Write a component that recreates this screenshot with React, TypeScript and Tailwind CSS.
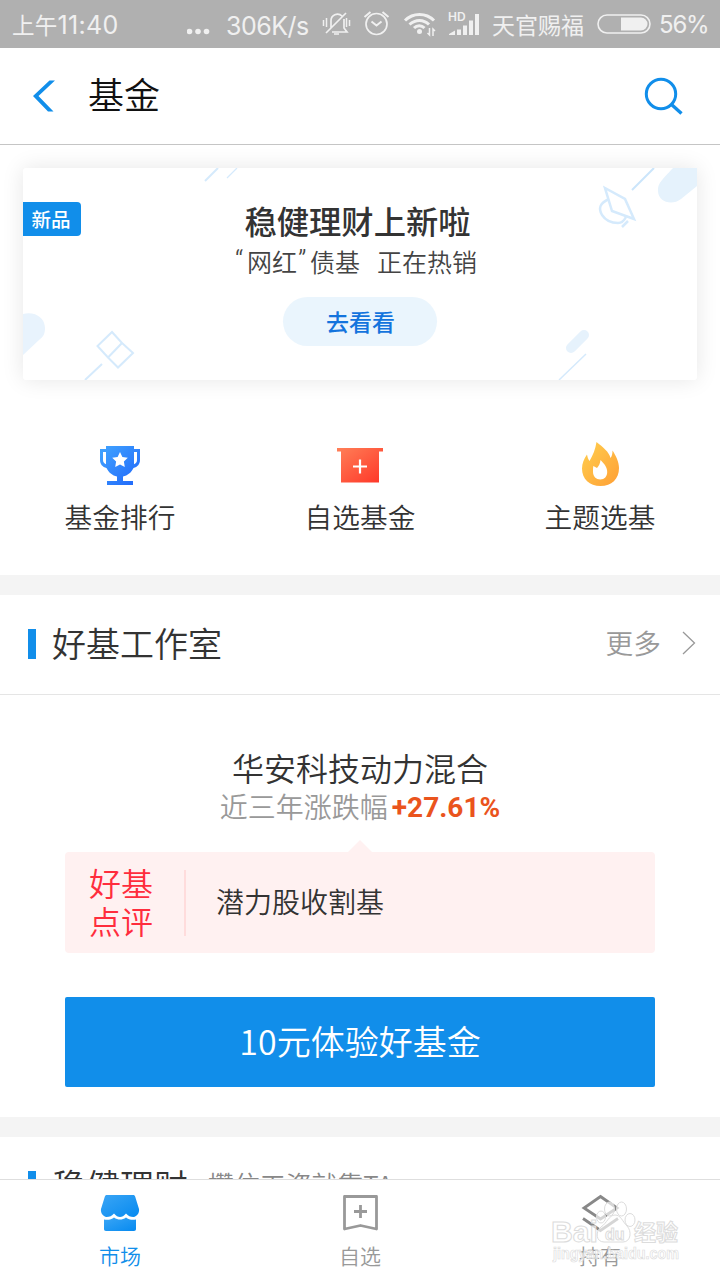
import type { ReactNode } from 'react';

const CJK = "font-['Noto_Sans_CJK_SC',sans-serif]";

function StatusBar() {
  return (
    <div className="flex h-12 shrink-0 items-center bg-[#b0b0b0] pl-[12px] text-[23px] leading-[30px] text-[#f0f0f0]">
      <span className="mt-[3px] w-[175px] whitespace-nowrap font-['Inter','Noto_Sans_CJK_SC',sans-serif] text-[25px] tracking-[0.3px]">
        <span className="text-[22.500px]">上午</span>11:40
      </span>
      <svg className="w-[24px]" height="48" viewBox="0 0 24 48" fill="currentColor">
        <circle cx="2.5" cy="31.5" r="2.8" />
        <circle cx="11" cy="31.5" r="2.8" />
        <circle cx="19.500" cy="31.5" r="2.8" />
      </svg>
      <span className="ml-[15px] mt-[3px] w-[95px] whitespace-nowrap font-['Inter',sans-serif] text-[25px] tracking-[-0.5px]">
        306K/s
      </span>
      <StatusIcons />
      <span className="ml-[11px] w-[105px] whitespace-nowrap text-[23px]">天官赐福</span>
      <svg width="55" height="48" viewBox="0 0 55 48" fill="none">
        <rect x="1" y="15" width="52" height="18" rx="9" stroke="#f0f0f0" strokeWidth="1.6" />
        <path d="M24 17.500h20a6.500 6.500 0 0 1 0 13H24z" fill="#f0f0f0" />
      </svg>
      <span className="ml-[7px] mt-[2px] whitespace-nowrap font-['Inter',sans-serif] text-[24px] tracking-[-1.2px]">56%</span>
    </div>
  );
}

function StatusIcons() {
  return (
    <svg width="160" height="48" viewBox="321 0 160 48" fill="none" stroke="#f0f0f0" strokeWidth="1.700">
      {/* muted bell */}
      <path d="M328 31l3-3v-7a6.500 6.500 0 0 1 11-5M344 19v9l3 4h-15M334 34h5M326 33l20-20" />
      <path d="M323.500 20v6M326.500 18v9M346.500 18v9M349.500 20v6" strokeWidth="1.500" />
      {/* alarm clock */}
      <circle cx="376.500" cy="24" r="10.500" />
      <path d="M371.500 21.500l5 4 5-4M364.500 17l6-5M388.500 17l-6-5" strokeWidth="2" />
      {/* wifi */}
      <path d="M405 20.500c8-8 21-8 29 0M409.500 24.500c6-5.500 14-5.500 19.500 0M414 28c3-3 7.500-3 10.500 0" strokeWidth="3" />
      <circle cx="419.500" cy="31.500" r="2.500" fill="#f0f0f0" stroke="none" />
      <path d="M429.500 28v7l-2-2M433 36v-7l2 2" strokeWidth="1.500" />
      {/* signal */}
      <g fill="#f0f0f0" stroke="none">
        <path d="M449 35v-1l6-3.500V35zM457 29.500h4V35h-4zM463 25.500h4V35h-4zM469 20.500h4V35h-4zM475 14h4v21h-4z" />
        <text x="448" y="21" fontSize="12" fontWeight="600" fontFamily="Inter, sans-serif">HD</text>
      </g>
    </svg>
  );
}

function Header() {
  return (
    <div className="flex h-[97px] shrink-0 items-center border-b border-[#c5c5c5] bg-white pl-8 pr-9">
      <svg width="24" height="32" viewBox="0 0 24 32" fill="#118eea">
        <path d="M17.500.500H23L6.500 16 21.500 31.500h-5.500L1 16z" />
      </svg>
      <h1 className="mb-[7px] ml-[32px] flex-1 text-[36px] font-[350] leading-[48px] text-[#111]">基金</h1>
      <svg width="40" height="40" viewBox="0 0 40 40" fill="none" stroke="#118eea" strokeWidth="3">
        <circle cx="17" cy="18" r="14.700" />
        <path d="M27.500 28.500l10 9" strokeWidth="3.400" />
      </svg>
    </div>
  );
}

function Banner() {
  return (
    <div className="relative mx-[23px] mt-[23px] flex h-[212px] flex-col items-center overflow-visible rounded-[3px] bg-white pt-[32px] shadow-[0_0_22px_rgba(0,0,0,0.1)]">
      <svg className="absolute inset-0" width="674" height="212" viewBox="0 0 674 212" fill="none" stroke="#d5eafc" strokeWidth="2">
        <path d="M182 13L195 0" />
        <path d="M204 10l10-10" strokeWidth="1.200" />
        <path d="M0 146c12-3 22 4 22 14 0 6-2 9-6 12L0 187z" fill="#e8f3fd" stroke="none" />
        <path d="M62 212l17-16" />
        <path d="M89 164l10 11-14 14.500L74.500 178zM99 175l11 10-15 14.500-10-10z" />
        <path d="M609 22l22-22" stroke="#cbe5fb" />
        <path d="M582 20l20 11 9 20-22-8z" strokeWidth="2.500" />
        <path d="M586 31c-9 4-11 9-7 16 4 6 10 8 16 8 4 0 6-2 8-6M599 59l6-6" strokeWidth="2.500" />
        <path d="M650 0h24v18l-16 13c-9 7-23 3-23-8 0-8 3-10 15-23z" fill="#e5f2fc" stroke="none" />
        <path d="M548 180l13-13" stroke="#e6f2fc" strokeWidth="10" strokeLinecap="round" />
        <path d="M536 212l27-26" strokeWidth="1.500" />
      </svg>
      <span className="absolute left-0 top-[34px] flex h-[34px] w-[58px] items-center justify-center rounded-r-[4px] bg-[#118eea] pr-[2px] text-[19.500px] font-medium leading-[30px] text-white">
        新品
      </span>
      <div className="relative mr-[5px] text-[32.300px] font-medium leading-[40px] text-[#333]">稳健理财上新啦</div>
      <div className="relative mr-[8px] mt-[3px] flex whitespace-nowrap text-[25px] font-[350] leading-[36px] text-[#444]">
        <span className="w-[12px] font-['Roboto',sans-serif] text-[28px] font-light">“</span>
        <span>网红</span>
        <span className="w-[13px] pl-[1px] font-['Roboto',sans-serif] text-[28px] font-light">”</span>
        <span>债基</span>
        <span className="ml-[17px]">正在热销</span>
      </div>
      <button className="relative mt-[18px] h-[49px] w-[154px] rounded-full bg-[#eaf5fd] pb-[2px] pl-[1px] text-[23px] font-medium leading-[36px] text-[#1374dd]">
        去看看
      </button>
    </div>
  );
}

function TrophyIcon() {
  return (
    <svg width="48" height="48" viewBox="0 0 48 48">
      <defs>
        <linearGradient id="trophy" x1="0" y1="0" x2="1" y2="1">
          <stop offset="0" stopColor="#42a5ff" />
          <stop offset="1" stopColor="#1f66fa" />
        </linearGradient>
      </defs>
      <path
        fill="url(#trophy)"
        fillRule="evenodd"
        d="M10 5h28v3h6v11c0 4-2.500 7-6.500 8-2 4.500-6 7.500-10.500 8.500V40h10v4H11v-4h10v-4.500c-4.500-1-8.500-4-10.500-8.500-4-1-6.500-4-6.500-8V8h6zM10 11H7v8c0 2 1 3.500 3 4.300zM38 11v12.300c2-.8 3-2.300 3-4.300v-8z"
      />
      <path fill="#fff" d="M24 11l2.400 4.900 5.400.8-3.900 3.800.9 5.400-4.800-2.500-4.800 2.500.9-5.400-3.900-3.800 5.400-.8z" />
    </svg>
  );
}

function RedBoxIcon() {
  return (
    <svg width="48" height="48" viewBox="0 0 48 48">
      <defs>
        <linearGradient id="redbox" x1="0" y1="0" x2="1" y2="1">
          <stop offset="0" stopColor="#ff8058" />
          <stop offset="1" stopColor="#ff3527" />
        </linearGradient>
      </defs>
      <path fill="url(#redbox)" d="M1 7h46v3.500h-4V41.500H5V10.500H1z" />
      <path d="M24 18.500v14M17 25.500h14" stroke="#fff" strokeWidth="2.200" />
    </svg>
  );
}

function FlameIcon() {
  return (
    <svg width="48" height="48" viewBox="0 0 48 48">
      <defs>
        <linearGradient id="flame" x1="0" y1="0" x2="1" y2="1">
          <stop offset="0" stopColor="#ffd04f" />
          <stop offset="1" stopColor="#ff9f35" />
        </linearGradient>
      </defs>
      <path
        fill="url(#flame)"
        d="M20.500 1C27 6 33 11 34.500 17c1.500-2 2-4.500 2-7.500C40 15 43 21 43 27c0 11-7.500 18-18.500 18S6 38 6 27.500C6 22 8 18 11 13.500c.5 2.500 1 4.500 2.500 6.500C17 14 19.500 8 20.500 1z"
      />
      <path fill="#fff" d="M24.500 19c4 4 6.700 7.500 6.700 12 0 4.500-2.700 7.500-6.900 7.500S17 35.500 17 31c0-2.500 0-4 .3-6l3.700 2c2-2.200 3.200-4.700 3.500-8z" />
    </svg>
  );
}

function Shortcut({ icon, label }: { icon: ReactNode; label: string }) {
  return (
    <div className="flex flex-1 flex-col items-center">
      {icon}
      <span className="mt-[7px] text-[27.700px] font-[350] leading-[40px] text-[#333]">{label}</span>
    </div>
  );
}

function SectionHeader({ title, note, more }: { title: string; note?: string; more?: boolean }) {
  return (
    <div className="flex h-[100px] shrink-0 items-center border-b border-[#e5e5e5] bg-white pl-7 pr-6">
      <div className="mb-[1px] h-[30px] w-2 bg-[#118eea]" />
      <h2 className="mb-[3px] ml-4 text-[34px] font-[350] leading-[44px] text-[#333]">{title}</h2>
      {note && <span className="mb-[6px] ml-[20px] text-[25.900px] font-[350] leading-[44px] text-[#888]">{note}</span>}
      {more && (
        <div className="ml-auto flex items-center">
          <span className="mb-[6px] text-[27.700px] font-[350] leading-[44px] text-[#999]">更多</span>
          <svg className="mb-[3px] ml-[21px]" width="14" height="24" viewBox="0 0 14 24" fill="none" stroke="#999" strokeWidth="1.300">
            <path d="M1 1l11.500 11L1 23" />
          </svg>
        </div>
      )}
    </div>
  );
}

function FundCard() {
  return (
    <div className="flex shrink-0 flex-col items-center bg-white px-[65px] pb-[30px] pt-[52px]">
      <div className="text-[32px] font-[350] leading-[40px] text-[#333]">华安科技动力混合</div>
      <div className="flex items-center text-[28px] font-[350] leading-[38px] text-[#999]">
        近三年涨跌幅
        <span className="ml-[4px] mt-[4px] font-['Roboto',sans-serif] text-[28px] font-bold leading-[34px] text-[#ea541d]">
          +27.61%
        </span>
      </div>
      <svg className="mt-[15px]" width="24" height="12" viewBox="0 0 24 12">
        <path d="M12 0l12 12H0z" fill="#fff1f1" />
      </svg>
      <div className="flex h-[101px] w-full items-center rounded-[4px] bg-[#fff1f1] pl-[24px]">
        <div className="mb-[4px] w-[95px] text-[32px] font-[350] leading-[38px] text-[#ff2d3d]">
          好基
          <br />
          点评
        </div>
        <div className="h-[66px] w-[2px] bg-[#ffdcdc]" />
        <div className="mb-[3px] ml-[30px] text-[28px] font-[350] leading-[40px] text-[#333]">潜力股收割基</div>
      </div>
      <button className="mt-[44px] h-[90px] w-full rounded-[2px] bg-[#118eea] pb-[3px] text-[34px] font-[350] leading-[44px] text-white">
        10元体验好基金
      </button>
    </div>
  );
}

function NavItem({ icon, label, active }: { icon: ReactNode; label: string; active?: boolean }) {
  return (
    <div className={`flex flex-1 flex-col items-center pt-[13px] ${active ? 'text-[#118eea]' : 'text-[#999]'}`}>
      {icon}
      <span className="mt-[6px] text-[21px] font-[350] leading-[32px]">{label}</span>
    </div>
  );
}

function MarketIcon() {
  return (
    <svg width="40" height="40" viewBox="0 0 40 40">
      <defs>
        <linearGradient id="market" x1="0" y1="0" x2="1" y2="1">
          <stop offset="0" stopColor="#3aa5f5" />
          <stop offset="1" stopColor="#068af0" />
        </linearGradient>
      </defs>
      <path
        fill="url(#market)"
        d="M7 2h26c1.300 0 1.900.6 2.300 2L39 16c.6 4-2 7.500-5.500 8-3 0-5.500-1-7.500-3.500-2 2.500-4 3.500-6 3.500s-4-1-6-3.500C12 23 9.500 24 6.500 24 3 23.500.4 20 1 16L4.700 4C5.100 2.600 5.700 2 7 2z"
      />
      <path fill="url(#market)" d="M4 26.500c4 .8 7.500 0 10-2 4 2.800 8 2.800 12 0 2.500 2 6 2.800 10 2V36c0 1.300-.7 2-2 2H6c-1.300 0-2-.7-2-2z" />
    </svg>
  );
}

function BookmarkIcon() {
  return (
    <svg width="40" height="40" viewBox="0 0 40 40" fill="none" stroke="#999" strokeWidth="2.800" strokeLinejoin="round">
      <path d="M4.500 3.500h32v32.500L20.500 32.500l-16 3.500zM20.500 12v13M14 18.500h13" />
    </svg>
  );
}

function LayersIcon() {
  return (
    <svg width="40" height="40" viewBox="0 0 40 40" fill="none" stroke="#888" strokeWidth="2.800">
      <path d="M20.500 3.500L37 15 20.500 26 4 15zM3 25.500l17.500 12L38 25.500" />
    </svg>
  );
}

function BottomNav() {
  return (
    <nav className="relative z-10 flex h-[101px] shrink-0 border-t border-[#dedede] bg-white">
      <NavItem icon={<MarketIcon />} label="市场" active />
      <NavItem icon={<BookmarkIcon />} label="自选" />
      <NavItem icon={<LayersIcon />} label="持有" />
      <svg
        className="absolute right-[36px] top-[18px]"
        width="136"
        height="68"
        viewBox="0 0 136 68"
        fill="#fff"
        fillOpacity="0.65"
        stroke="#dcdcdc"
        strokeWidth="1"
        fontFamily="Liberation Sans, Noto Sans CJK SC, sans-serif"
      >
        <ellipse cx="53" cy="19" rx="4.500" ry="6" />
        <ellipse cx="61.500" cy="11" rx="5" ry="7" />
        <ellipse cx="73.500" cy="11" rx="5" ry="7" />
        <ellipse cx="82" cy="22" rx="5" ry="6.500" />
        <path d="M67 17c6 0 7 6 12 11s4 16-4 16H56c-8 0-9-10-3-15 6-4 8-12 14-12z" />
        <text x="3" y="44" fontSize="29" fontWeight="700" textLength="47" lengthAdjust="spacingAndGlyphs">Bai</text>
        <text x="57" y="42" fontSize="16" fontWeight="700">du</text>
        <text x="86" y="42" fontSize="22" fontWeight="700">经验</text>
        <text x="5" y="61" fontSize="16" fontWeight="700" textLength="126" lengthAdjust="spacingAndGlyphs" strokeWidth="0.700">
          jingyan.baidu.com
        </text>
      </svg>
    </nav>
  );
}

export default function App() {
  return (
    <div className={`flex h-[1280px] w-[720px] flex-col overflow-hidden bg-white ${CJK}`}>
      <StatusBar />
      <Header />
      <main className="flex min-h-0 flex-1 flex-col overflow-hidden">
        <div className="h-[430px] shrink-0 overflow-hidden">
          <div className="flow-root">
            <Banner />
          </div>
          <div className="mt-[61px] flex">
            <Shortcut icon={<TrophyIcon />} label="基金排行" />
            <Shortcut icon={<RedBoxIcon />} label="自选基金" />
            <Shortcut icon={<FlameIcon />} label="主题选基" />
          </div>
        </div>
        <div className="h-5 shrink-0 bg-[#f4f4f4]" />
        <SectionHeader title="好基工作室" more />
        <FundCard />
        <div className="h-5 shrink-0 bg-[#f4f4f4]" />
        <SectionHeader title="稳健理财" note="攒住工资就靠TA" />
      </main>
      <BottomNav />
    </div>
  );
}
